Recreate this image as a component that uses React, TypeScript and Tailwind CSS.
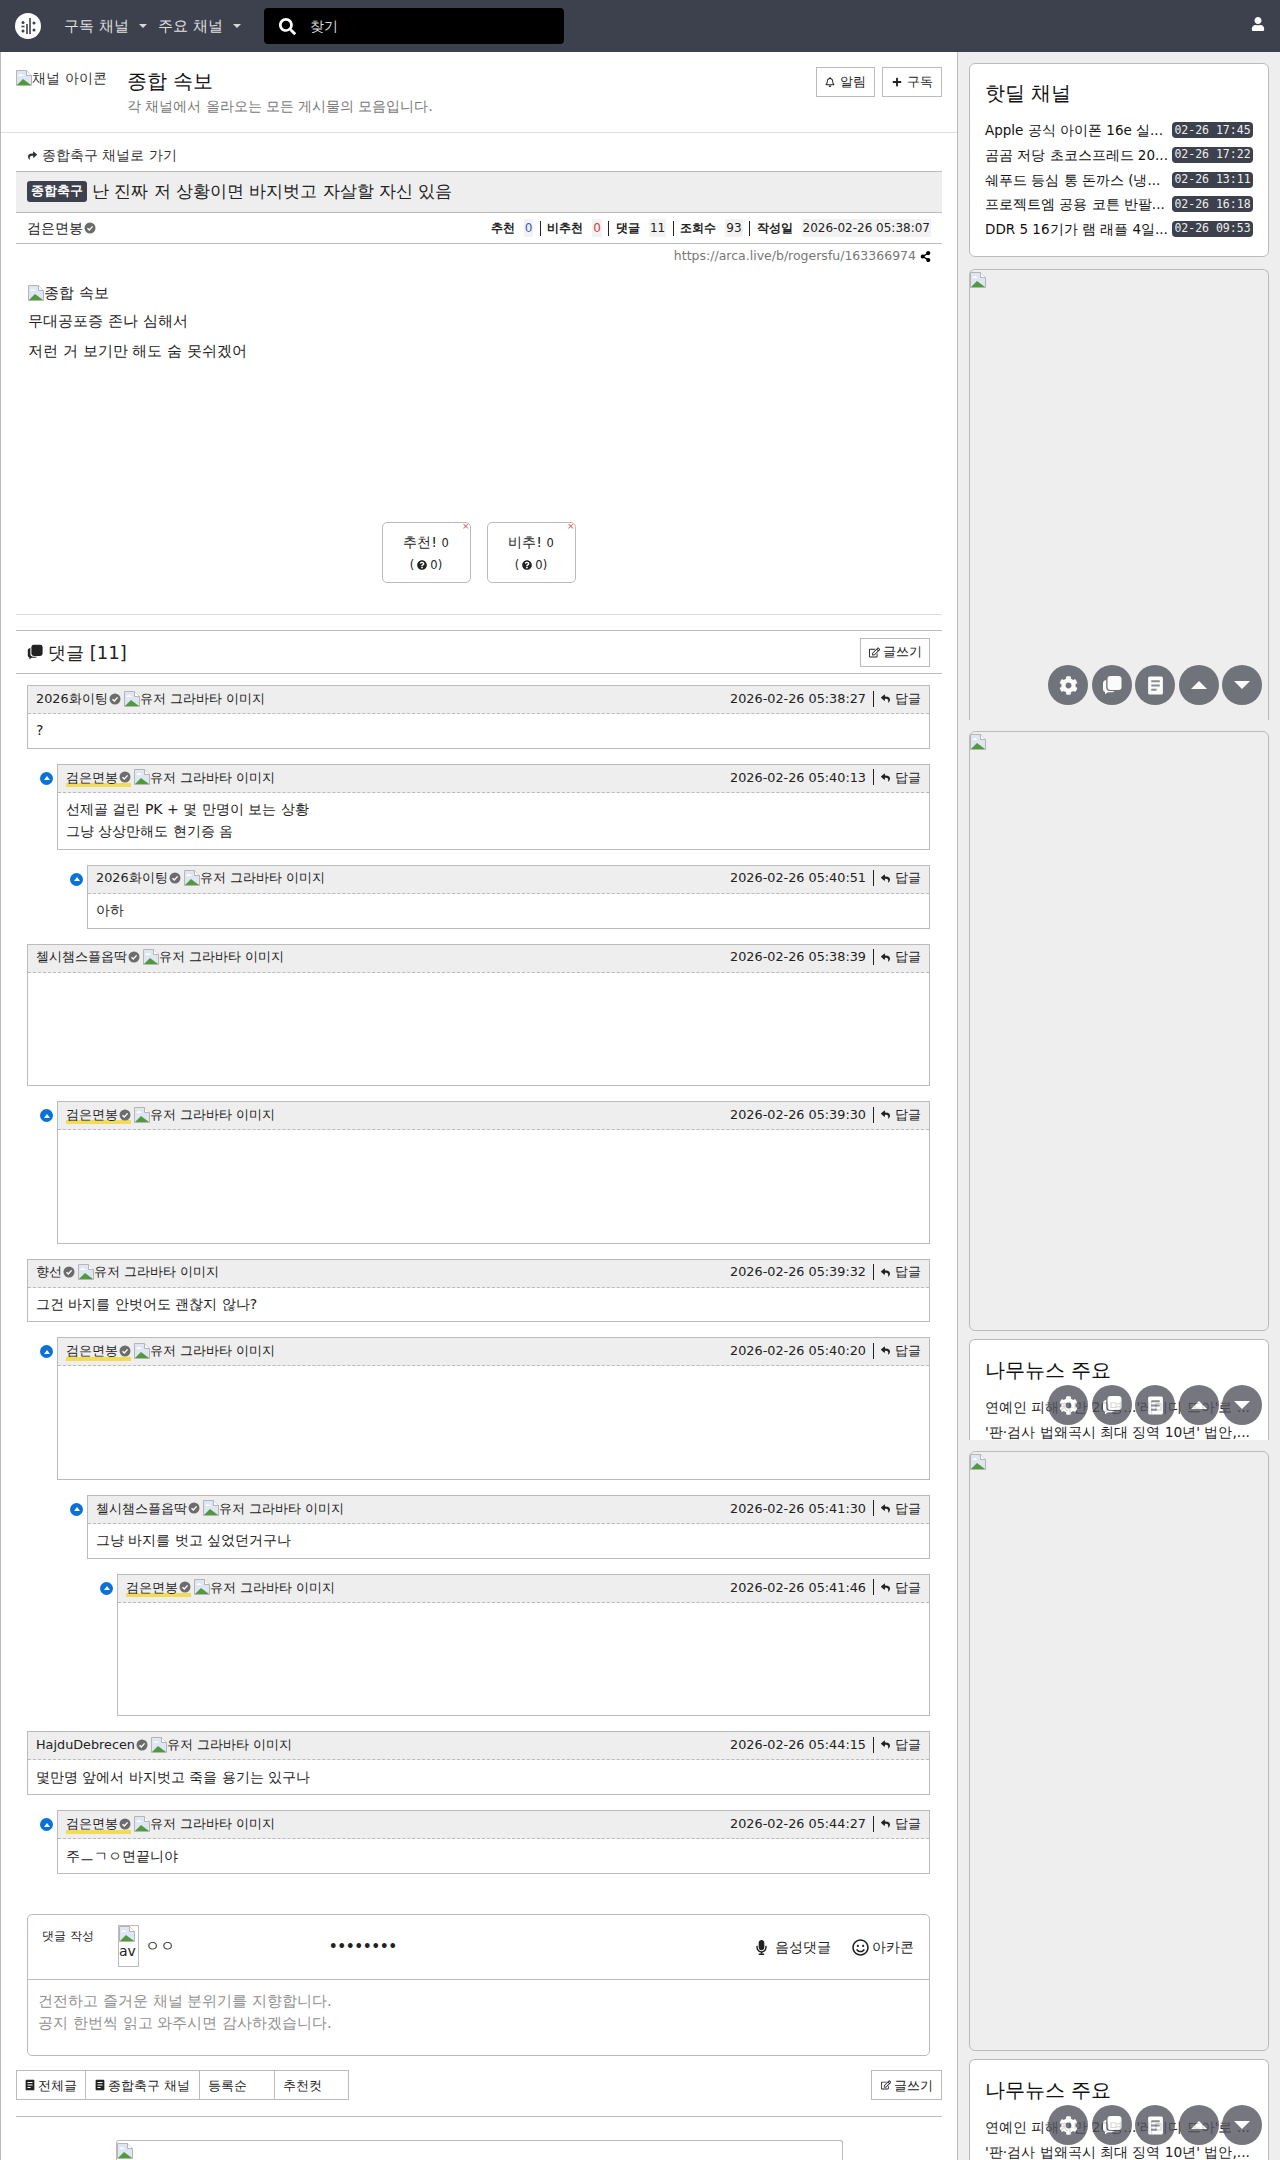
import { FaSearch, FaUser, FaPlus, FaShareAlt, FaShare, FaReply, FaRegEdit, FaMicrophone, FaRegSmile, FaQuestionCircle, FaRegBell, FaCog } from "react-icons/fa";

const SANS = "font-['DejaVu_Sans',sans-serif]";

function BrokenImg() {
  return (
    <svg width="16" height="16" viewBox="0 0 16 16" className="inline-block shrink-0 align-text-bottom">
      <path d="M0.5 0.5H10.5L15.5 5.5V15.5H0.5Z" fill="#dfe6f3" stroke="#b5b5b5" />
      <path d="M10.5 0.5V5.5H15.5" fill="#fff" stroke="#b5b5b5" />
      <path d="M1 15L7 9L11 12L15 15Z" fill="#4f9a3a" />
      <path d="M2 6C3.5 3.5 6 3.5 8 6Z" fill="#fff" />
    </svg>
  );
}

function Verified() {
  return (
    <svg width="12" height="12" viewBox="0 0 12 12" className="inline-block shrink-0">
      <circle cx="6" cy="6" r="5.5" fill="#6c6c6c" />
      <path d="M3.5 6.2L5.3 8L8.6 4.4" fill="none" stroke="#fff" strokeWidth="1.4" />
    </svg>
  );
}

function Chat({ className = "" }: { className?: string }) {
  return (
    <svg viewBox="0 0 20 20" className={className} fill="currentColor">
      <rect x="5.5" y="1" width="14" height="14" rx="3" />
      <path d="M4.2 5V12.5C4.2 14.6 5.8 16 7.5 16H12.5C11.8 17 10.8 17.2 9 17.2L6 17.2L3 19.2V17C1.8 16.6 1 15.6 1 14V8.2C1 6.4 2.6 5 4.2 5Z" />
    </svg>
  );
}

function Doc({ className = "", line = "#fff" }: { className?: string; line?: string }) {
  return (
    <svg viewBox="0 0 16 18" className={className}>
      <rect x="1" y="0.5" width="14" height="17" rx="1.5" fill="currentColor" />
      <path d="M4 5H12M4 9H12M4 13H9" stroke={line} strokeWidth="1.8" />
    </svg>
  );
}

function Caret() {
  return <span className="ml-[10px] inline-block h-0 w-0 border-x-[4px] border-t-[4px] border-x-transparent border-t-[#d8d8d8]" />;
}

type CommentData = {
  name: string;
  date: string;
  depth: number;
  lines?: string[];
  mine?: boolean;
};

const comments: CommentData[] = [
  { name: "2026화이팅", date: "2026-02-26 05:38:27", depth: 0, lines: ["?"] },
  { name: "검은면봉", date: "2026-02-26 05:40:13", depth: 1, mine: true, lines: ["선제골 걸린 PK + 몇 만명이 보는 상황", "그냥 상상만해도 현기증 옴"] },
  { name: "2026화이팅", date: "2026-02-26 05:40:51", depth: 2, lines: ["아하"] },
  { name: "첼시챔스플옵딱", date: "2026-02-26 05:38:39", depth: 0 },
  { name: "검은면봉", date: "2026-02-26 05:39:30", depth: 1, mine: true },
  { name: "향선", date: "2026-02-26 05:39:32", depth: 0, lines: ["그건 바지를 안벗어도 괜찮지 않나?"] },
  { name: "검은면봉", date: "2026-02-26 05:40:20", depth: 1, mine: true },
  { name: "첼시챔스플옵딱", date: "2026-02-26 05:41:30", depth: 2, lines: ["그냥 바지를 벗고 싶었던거구나"] },
  { name: "검은면봉", date: "2026-02-26 05:41:46", depth: 3, mine: true },
  { name: "HajduDebrecen", date: "2026-02-26 05:44:15", depth: 0, lines: ["몇만명 앞에서 바지벗고 죽을 용기는 있구나"] },
  { name: "검은면봉", date: "2026-02-26 05:44:27", depth: 1, mine: true, lines: ["주ㅡㄱㅇ면끝니야"] },
];

const hotdeals = [
  ["Apple 공식 아이폰 16e 실...", "02-26 17:45"],
  ["곰곰 저당 초코스프레드 20...", "02-26 17:22"],
  ["쉐푸드 등심 통 돈까스 (냉...", "02-26 13:11"],
  ["프로젝트엠 공용 코튼 반팔...", "02-26 16:18"],
  ["DDR 5 16기가 램 래플 4일...", "02-26 09:53"],
];

function Comment({ c }: { c: CommentData }) {
  const ml = ["ml-0", "ml-[30px]", "ml-[60px]", "ml-[90px]"][c.depth];
  return (
    <div className={`relative mb-[15px] border border-[#bbb] ${ml}`}>
      {c.depth > 0 && (
        <span className="absolute left-[-18px] top-[7px] flex h-[13px] w-[13px] items-center justify-center rounded-full bg-[#0a72d6]">
          <span className="h-0 w-0 border-x-[3.5px] border-b-[4px] border-x-transparent border-b-white" />
        </span>
      )}
      <div className="flex h-[28px] items-center justify-between border-b border-dashed border-[#bbb] bg-[#eee] pb-[2px] pl-[8px] pr-[8px] text-[12.8px] text-[#222]">
        <div className="flex items-center">
          <span className={`flex items-center gap-[1px] ${c.mine ? "bg-[linear-gradient(to_bottom,transparent_78%,#f3dc55_78%)]" : ""}`}>
            {c.name}
            <Verified />
          </span>
          <span className="ml-[3px] flex items-center">
            <BrokenImg />
            유저 그라바타 이미지
          </span>
        </div>
        <div className="flex items-center">
          <span>{c.date}</span>
          <span className="mx-[7px] h-[16px] w-px bg-[#222]" />
          <FaReply className="mr-[5px] text-[9px]" />
          <span>답글</span>
        </div>
      </div>
      {c.lines ? (
        <div className="px-[8px] py-[6.2px] text-[14px] leading-[21.6px] text-[#222]">
          {c.lines.map(l => (
            <div key={l}>{l}</div>
          ))}
        </div>
      ) : (
        <div className="h-[112.5px]" />
      )}
    </div>
  );
}

function Floaters({ className }: { className: string }) {
  const btn = "flex h-[40px] w-[40px] items-center justify-center rounded-full bg-[#53555f] text-white opacity-80";
  return (
    <div className={`absolute right-[18px] flex gap-[3.5px] ${className}`}>
      <div className={btn}><FaCog className="text-[19px]" /></div>
      <div className={btn}><Chat className="h-[20px] w-[20px]" /></div>
      <div className={btn}><Doc className="h-[19px] w-[17px] text-white" line="#72747d" /></div>
      <div className={btn}><span className="h-0 w-0 border-x-[8px] border-b-[8px] border-x-transparent border-b-white" /></div>
      <div className={btn}><span className="h-0 w-0 border-x-[8px] border-t-[8px] border-x-transparent border-t-white" /></div>
    </div>
  );
}

function NewsCard({ height }: { height: string }) {
  return (
    <div className={`overflow-hidden rounded-t-[6px] border border-b-0 border-[#bbb] bg-white px-[15px] pt-[18px] ${height}`}>
      <div className="text-[20px] leading-[24px] text-[#111]">나무뉴스 주요</div>
      <div className="mt-[13px] truncate text-[13.8px] leading-[25px] text-[#222]">연예인 피해자만 20명...'레미디 뜨아'로 ...</div>
      <div className="truncate text-[13.8px] leading-[25px] text-[#222]">'판·검사 법왜곡시 최대 징역 10년' 법안,...</div>
    </div>
  );
}

export default function App() {
  return (
    <div className={`relative h-[2160px] w-[1280px] overflow-hidden bg-white text-[14px] text-[#222] ${SANS}`}>
      {/* top nav */}
      <nav className="flex h-[52px] items-center bg-[#3d414d] pl-[15px] pr-[15px] text-[15px] text-[#e0e0e0]">
        <svg width="26" height="26" viewBox="0 0 26 26">
          <circle cx="13" cy="13" r="13" fill="#fff" />
          <path d="M12 11V21M15 5V21" stroke="#3d414d" strokeWidth="1.6" />
          <circle cx="8" cy="9.5" r="1.5" fill="#3d414d" />
          <path d="M6.5 13.5H9.5" stroke="#3d414d" strokeWidth="1.6" />
          <circle cx="8" cy="18" r="1.5" fill="#3d414d" />
          <circle cx="19" cy="10" r="1.5" fill="#3d414d" />
          <circle cx="19" cy="17" r="1.5" fill="#3d414d" />
        </svg>
        <span className="ml-[23px]">구독 채널</span>
        <Caret />
        <span className="ml-[11.5px]">주요 채널</span>
        <Caret />
        <div className="ml-[23px] flex h-[36px] w-[300px] items-center rounded-[4px] bg-black pl-[15px] text-[#ddd]">
          <FaSearch className="text-[17px] text-white" />
          <span className="ml-[14px] text-[14px]">찾기</span>
        </div>
        <FaUser className="mb-[4px] ml-auto text-[14px] text-white" />
      </nav>

      <div className="flex">
        {/* main column */}
        <main className="h-[2108px] w-[958px] shrink-0 border-x border-[#bbb]">
          <div className="flex h-[81px] border-b border-[#ddd] pl-[15px] pr-[15px]">
            <div className="mt-[18px] flex h-[16px] w-[95px] items-center overflow-hidden whitespace-nowrap text-[14.4px] leading-[16px] text-[#333]">
              <BrokenImg />
              채널 아이콘
            </div>
            <div className="ml-[16px] pt-[16px]">
              <div className="text-[20px] leading-[26px] text-[#111]">종합 속보</div>
              <div className="mt-[2px] text-[13.5px] leading-[20px] text-[#777]">각 채널에서 올라오는 모든 게시물의 모음입니다.</div>
            </div>
            <div className="ml-auto mt-[15px] flex h-[30px] gap-[7px] text-[12.8px]">
              <button className="flex w-[59px] items-center justify-center gap-[5px] border border-[#bbb]"><FaRegBell className="text-[10px]" />알림</button>
              <button className="flex w-[60px] items-center justify-center gap-[5px] border border-[#bbb]"><FaPlus className="text-[10px]" />구독</button>
            </div>
          </div>

          <div className="pl-[15px] pr-[15px]">
            <div className="flex h-[38px] items-end pb-[6px] pl-[12px] text-[13.5px] leading-[20px] text-[#333]">
              <FaShare className="mb-[5px] mr-[5px] text-[9px]" />
              종합축구 채널로 가기
            </div>
            <div className="flex h-[42px] items-center border-y border-[#bbb] bg-[#eee] pb-[1px] pl-[11px] text-[16.8px]">
              <span className="mr-[5px] flex h-[21px] w-[60px] items-center justify-center rounded-[3px] bg-[#3d414d] text-[12.5px] font-bold text-white">종합축구</span>
              난 진짜 저 상황이면 바지벗고 자살할 자신 있음
            </div>
            <div className="flex h-[31px] items-center justify-between border-b border-[#bbb] pl-[11px] pr-[11px]">
              <span className="flex items-center gap-[1px] text-[14px]">검은면봉<Verified /></span>
              <div className="flex items-center text-[12px]">
                <b>추천</b>
                <span className="ml-[9px] bg-[#f2f2f2] px-[1px] text-[#3b5bc5]">0</span>
                <span className="mx-[6.5px] h-[15px] w-px bg-[#222]" />
                <b>비추천</b>
                <span className="ml-[9px] bg-[#f2f2f2] px-[1px] text-[#c9403c]">0</span>
                <span className="mx-[6.5px] h-[15px] w-px bg-[#222]" />
                <b>댓글</b>
                <span className="ml-[9px] bg-[#f2f2f2] px-[1px]">11</span>
                <span className="mx-[6.5px] h-[15px] w-px bg-[#222]" />
                <b>조회수</b>
                <span className="ml-[9px] bg-[#f2f2f2] px-[1px]">93</span>
                <span className="mx-[6.5px] h-[15px] w-px bg-[#222]" />
                <b>작성일</b>
                <span className="ml-[9px] bg-[#f2f2f2] px-[1px]">2026-02-26 05:38:07</span>
              </div>
            </div>
            <div className="flex h-[24px] items-center justify-end gap-[4px] pr-[11px] text-[12.5px] text-[#777]">
              https://arca.live/b/rogersfu/163366974
              <FaShareAlt className="text-[11px] text-black" />
            </div>

            {/* article body */}
            <div className="h-[254px] pl-[12px] pt-[12px] text-[15px] leading-[30px] text-[#222]">
              <div className="flex h-[25px] items-center"><BrokenImg />종합 속보</div>
              <div className="mt-[1px]">무대공포증 존나 심해서</div>
              <div>저런 거 보기만 해도 숨 못쉬겠어</div>
            </div>

            <div className="flex justify-center gap-[16px] pr-[1px]">
              {["추천!", "비추!"].map(label => (
                <div key={label} className="relative flex h-[61px] w-[89px] flex-col items-center justify-center rounded-[5px] border border-[#bbb]">
                  <span className="absolute right-[0px] top-[-1px] text-[9px] leading-[9px] text-[#d9534f]">×</span>
                  <div className="text-[14.4px] leading-[24px]">{label} <span className="text-[11.5px]">0</span></div>
                  <div className="flex items-center text-[11.5px] leading-[20px]">(<FaQuestionCircle className="mx-[3px] text-[10px]" />0)</div>
                </div>
              ))}
            </div>

            <div className="mt-[31px] h-px bg-[#ddd]" />
            <div className="mt-[15px] flex h-[44px] items-center border-y border-[#bbb] pl-[11px] pr-[12px]">
              <Chat className="h-[16px] w-[16px]" />
              <span className="ml-[5px] text-[18px]">댓글 [11]</span>
              <button className="ml-auto flex h-[29px] w-[70px] items-center justify-center gap-[3px] border border-[#bbb] text-[12.8px]"><FaRegEdit className="text-[11px]" />글쓰기</button>
            </div>

            {/* comments */}
            <div className="ml-[11px] mr-[12px] mt-[11px]">
              {comments.map((c, i) => (
                <Comment key={i} c={c} />
              ))}

              {/* reply form */}
              <div className="mt-[40px] rounded-[5px] border border-[#bbb]">
                <div className="flex h-[65px] items-center border-b border-[#bbb] pr-[15px]">
                  <span className="mb-[22px] ml-[14px] w-[76px] text-[12px]">댓글 작성</span>
                  <div className="mb-[3px] flex h-[42px] w-[21px] flex-col overflow-hidden border border-[#bbb] text-[14px] leading-[18px]">
                    <BrokenImg />
                    <span>av</span>
                  </div>
                  <span className="ml-[6px] mt-[-2px] text-[15px]">ㅇㅇ</span>
                  <span className="ml-[154px] text-[13.3px] font-bold">••••••••</span>
                  <div className="ml-auto mt-[1px] flex items-center text-[14px]">
                    <FaMicrophone className="mr-[6px] text-[15px]" />
                    음성댓글
                    <FaRegSmile className="ml-[21px] mr-[3px] text-[17px]" />
                    아카콘
                  </div>
                </div>
                <div className="h-[75px] pl-[10px] pt-[11px] text-[15px] leading-[21.6px] text-[#909090]">
                  건전하고 즐거운 채널 분위기를 지향합니다.
                  <br />
                  공지 한번씩 읽고 와주시면 감사하겠습니다.
                </div>
              </div>
            </div>

            {/* list buttons */}
            <div className="mt-[14px] flex h-[30px] text-[12.8px]">
              <div className="flex w-[70px] items-center justify-center gap-[3px] border border-[#bbb]"><Doc className="h-[12px] w-[10px]" />전체글</div>
              <div className="flex w-[114px] items-center justify-center gap-[3px] border border-l-0 border-[#bbb]"><Doc className="h-[12px] w-[10px]" />종합축구 채널</div>
              <div className="flex w-[75px] items-center border border-l-0 border-[#bbb] pl-[8px]">등록순</div>
              <div className="flex w-[74px] items-center border border-l-0 border-[#bbb] pl-[8px]">추천컷</div>
              <button className="ml-auto flex w-[71px] items-center justify-center gap-[3px] border border-[#bbb]"><FaRegEdit className="text-[10px]" />글쓰기</button>
            </div>
            <div className="mt-[16px] h-px bg-[#bbb]" />
            <div className="mx-auto mt-[23px] h-[60px] w-[727px] rounded-t-[3px] border border-b-0 border-[#bbb]">
              <BrokenImg />
            </div>
          </div>
        </main>

        {/* sidebar */}
        <aside className="h-[2108px] w-[322px] bg-[#eee] pl-[11px] pr-[11px] pt-[11px]">
          <div className="h-[194px] rounded-[6px] border border-[#bbb] bg-white px-[15px] pt-[15px]">
            <div className="text-[20px] leading-[28px] text-[#111]">핫딜 채널</div>
            <div className="mt-[11px]">
              {hotdeals.map(([title, time]) => (
                <div key={time} className="flex h-[24.7px] items-center justify-between">
                  <span className="text-[13.5px] text-[#111]">{title}</span>
                  <span className="flex h-[16px] w-[81px] items-center justify-center rounded-[4px] bg-[#3d414d] font-['DejaVu_Sans_Mono',monospace] text-[11.5px] text-[#eee]">{time}</span>
                </div>
              ))}
            </div>
          </div>
          <div className="mt-[12px] h-[451px] rounded-t-[6px] border border-b-0 border-[#bbb]"><BrokenImg /></div>
          <div className="mt-[11px] h-[600px] rounded-[6px] border border-[#bbb]"><BrokenImg /></div>
          <div className="mt-[8px]"><NewsCard height="h-[101px]" /></div>
          <div className="mt-[11px] h-[600px] rounded-[6px] border border-[#bbb]"><BrokenImg /></div>
          <div className="mt-[8px]"><NewsCard height="h-[120px]" /></div>
        </aside>
      </div>

      {/* page-fixed buttons, repeated down the capture */}
      <Floaters className="top-[665px]" />
      <Floaters className="top-[1385px]" />
      <Floaters className="top-[2105px]" />
    </div>
  );
}
